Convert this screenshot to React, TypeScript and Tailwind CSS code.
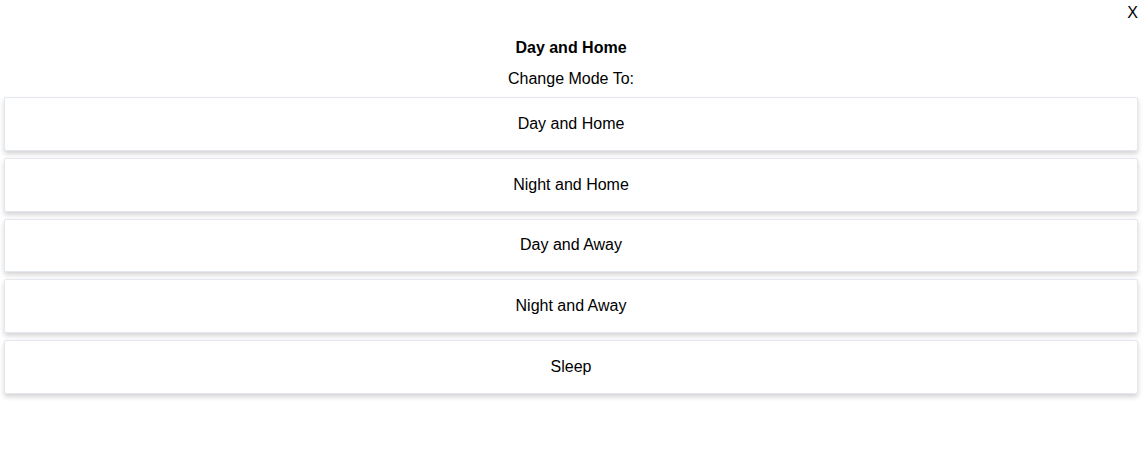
import React from 'react'

const modes = ['Day and Home', 'Night and Home', 'Day and Away', 'Night and Away', 'Sleep']

export default function App() {
  return (
    <div className="min-h-[452px] bg-white pt-[1px] font-['Liberation_Sans',Arial,sans-serif] text-black">
      <div className="flex h-6 items-center justify-end pr-[4px] text-[16px] leading-6">
        <button type="button">X</button>
      </div>
      <h2 className="mt-[13px] text-center text-[16px] font-bold leading-5">
        Day and Home
      </h2>
      <p className="mt-[9px] text-center text-[16px] leading-6">Change Mode To:</p>
      <div className="mt-[6px] flex flex-col gap-[7px] px-1">
        {modes.map((mode) => (
          <button
            key={mode}
            type="button"
            className="h-[53.75px] w-full rounded-[2px] border border-[#e3e7ee] bg-white text-[16px] shadow-[0_3px_5px_rgba(0,0,0,0.17)]"
          >
            {mode}
          </button>
        ))}
      </div>
    </div>
  )
}
